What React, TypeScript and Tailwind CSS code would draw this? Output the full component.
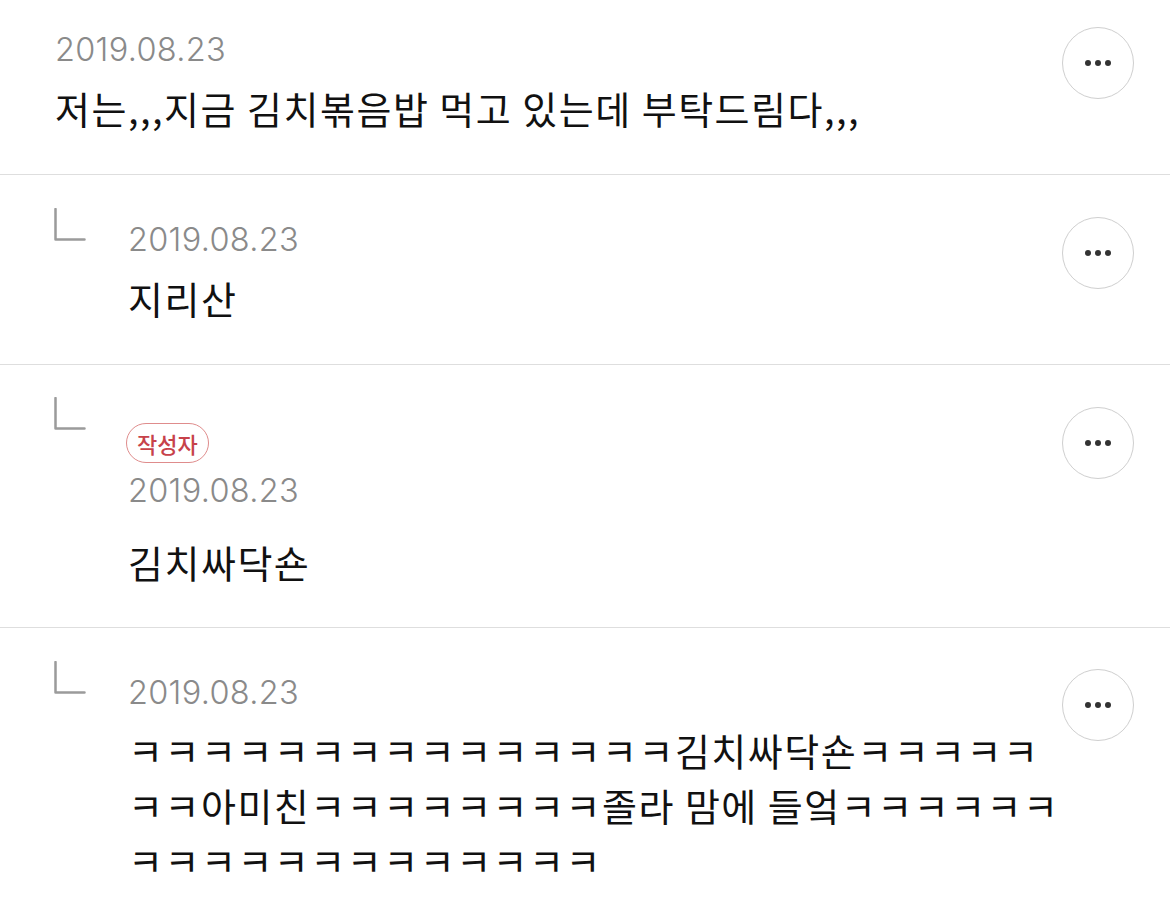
const KR = "font-['Noto_Sans_CJK_KR','Noto_Sans',sans-serif]";

const ReplyMark = () => (
  <svg width="33" height="34" viewBox="0 0 33 34" fill="none" className="shrink-0 -ml-[1px]">
    <path d="M1.5 1 V31.5 H30.5" stroke="#9b9b9b" strokeWidth="2.5" strokeLinecap="round" strokeLinejoin="round" />
  </svg>
);

const MoreButton = ({ mt }: { mt: string }) => (
  <button
    type="button"
    className={`${mt} shrink-0 w-[72px] h-[72px] rounded-full border border-[#cfcfcf] bg-white flex items-center justify-center gap-[4px]`}
  >
    <span className="w-[6px] h-[6px] rounded-full bg-[#333]" />
    <span className="w-[6px] h-[6px] rounded-full bg-[#333]" />
    <span className="w-[6px] h-[6px] rounded-full bg-[#333]" />
  </button>
);

const DateText = () => (
  <div className="font-['Inter','Roboto',sans-serif] text-[32.5px] font-light leading-[40px] tracking-[0.3px] text-[#8a8a8a]">2019.08.23</div>
);

const body = "text-[38px] leading-[55px] tracking-[1.5px]";

export default function App() {
  return (
    <div className={`w-[1170px] min-h-[923px] bg-white ${KR} text-[#111]`}>
      {/* first comment */}
      <div className="flex pl-[55px] pr-[36px] pt-[18px] pb-[39px] border-b border-[#dedede]">
        <div className="flex-1">
          <div className="pt-[12px]">
            <DateText />
          </div>
          <div className={`mt-[10px] ${body}`}>저는,,,지금 김치볶음밥 먹고 있는데 부탁드림다,,,</div>
        </div>
        <MoreButton mt="mt-[9px]" />
      </div>

      {/* reply 1 */}
      <div className="flex pl-[55px] pr-[36px] pt-[33px] pb-[39px] border-b border-[#dedede]">
        <div className="w-[73px] shrink-0">
          <ReplyMark />
        </div>
        <div className="flex-1 pt-[12px]">
          <DateText />
          <div className={`mt-[10px] ${body}`}>지리산</div>
        </div>
        <MoreButton mt="mt-[9px]" />
      </div>

      {/* reply 2 (writer) */}
      <div className="flex pl-[55px] pr-[36px] pt-[32px] pb-[38px] border-b border-[#dedede]">
        <div className="w-[73px] shrink-0">
          <ReplyMark />
        </div>
        <div className="flex-1 pt-[26px]">
          <span className="-ml-[2px] inline-flex items-center justify-center h-[40px] px-[10px] rounded-full border-[1.5px] border-[#df8c8c] text-[#c7424a] text-[22px] font-medium leading-none">
            작성자
          </span>
          <div className="mt-[8px]">
            <DateText />
          </div>
          <div className={`mt-[23px] ${body}`}>김치싸닥숀</div>
        </div>
        <MoreButton mt="mt-[10px]" />
      </div>

      {/* reply 3 */}
      <div className="flex pl-[55px] pr-[36px] pt-[33px] pb-[30px]">
        <div className="w-[73px] shrink-0">
          <ReplyMark />
        </div>
        <div className="flex-1 pt-[12px]">
          <DateText />
          <div className={`mt-[9px] ${body} whitespace-nowrap`}>
            <div>ㅋㅋㅋㅋㅋㅋㅋㅋㅋㅋㅋㅋㅋㅋㅋ김치싸닥숀ㅋㅋㅋㅋㅋ</div>
            <div>ㅋㅋ아미친ㅋㅋㅋㅋㅋㅋㅋㅋ졸라 맘에 들엌ㅋㅋㅋㅋㅋㅋ</div>
            <div>ㅋㅋㅋㅋㅋㅋㅋㅋㅋㅋㅋㅋㅋ</div>
          </div>
        </div>
        <MoreButton mt="mt-[8px]" />
      </div>
    </div>
  );
}
